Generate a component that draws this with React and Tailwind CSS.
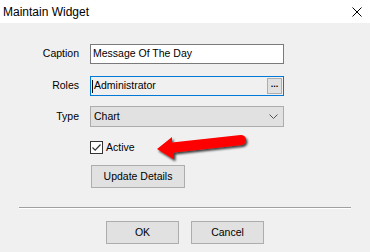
import React from "react";

const font = { fontFamily: '"Liberation Sans", Arial, sans-serif' };

// Red annotation arrow pointing at the Active checkbox
const Arrow = () => (
  <svg
    className="absolute left-0 top-0 pointer-events-none"
    width="370"
    height="252"
    viewBox="0 0 370 252"
  >
    <defs>
      <filter id="sh" x="-20%" y="-50%" width="140%" height="200%">
        <feDropShadow dx="1.5" dy="2" stdDeviation="1.3" floodColor="#000" floodOpacity="0.75" />
      </filter>
    </defs>
    <path
      d="M157 149 L172 137 L172 142.5 L240.5 135 A5 5 0 0 1 241.5 145 L174 152.5 L174 159.5 Z"
      fill="#ff0000"
      filter="url(#sh)"
    />
  </svg>
);

const Label = ({ children }) => (
  <div className="flex items-center justify-end text-[10.5px] text-black">{children}</div>
);

export default function App() {
  return (
    <div className="relative w-[370px] h-[252px] bg-[#f0f0f0] overflow-hidden" style={font}>
      {/* title bar */}
      <div className="h-[23px] bg-white flex items-center justify-between pl-[3px] pr-[8px]">
        <span className="text-[12px] text-black leading-none">Maintain Widget</span>
        <svg width="10" height="10" viewBox="0 0 10 10" className="mr-[0px]">
          <path d="M0.5 0.5 L9.5 9.5 M9.5 0.5 L0.5 9.5" stroke="#000" strokeWidth="1" />
        </svg>
      </div>

      {/* form */}
      <div className="pt-[21px]">
        <div className="grid grid-cols-[79px_194px] gap-x-[11px]">
          <Label>Caption</Label>
          <div className="h-[20px] bg-white border border-[#7a7a7a] flex items-center pl-[2px] text-[10.5px] text-black">
            Message Of The Day
          </div>
        </div>

        <div className="grid grid-cols-[79px_194px] gap-x-[11px] mt-[12px]">
          <Label>Roles</Label>
          <div className="h-[20px] bg-[#f0f0f0] border border-[#0078d7] flex items-center pl-[1px] pr-[1px] text-[10.5px] text-black">
            <span className="w-px h-[13px] bg-black mr-[1px]" />
            <span className="flex-1">Administrator</span>
            <span className="w-[15px] h-[16px] bg-[#e1e1e1] border border-[#adadad] flex items-center justify-center text-[9px] font-bold leading-none pb-[3px]">
              ...
            </span>
          </div>
        </div>

        <div className="grid grid-cols-[79px_194px] gap-x-[11px] mt-[10px]">
          <Label>Type</Label>
          <div className="h-[21px] bg-[#e1e1e1] border border-[#adadad] flex items-center justify-between pl-[3px] pr-[5px] text-[10.5px] text-black">
            <span>Chart</span>
            <svg width="9" height="5" viewBox="0 0 9 5">
              <path d="M0.5 0.5 L4.5 4.5 L8.5 0.5" stroke="#555" strokeWidth="1" fill="none" />
            </svg>
          </div>
        </div>

        <div className="ml-[90px] mt-[14px] flex items-center h-[13px]">
          <span className="w-[13px] h-[13px] bg-white border border-[#333] flex items-center justify-center">
            <svg width="11" height="11" viewBox="0 0 11 11">
              <path d="M1.5 5.5 L4.2 8.2 L9.5 2.5" stroke="#333" strokeWidth="1.2" fill="none" />
            </svg>
          </span>
          <span className="ml-[3px] text-[10.5px] text-black">Active</span>
        </div>

        <button className="ml-[91px] mt-[11px] w-[94px] h-[23px] bg-[#e1e1e1] border border-[#adadad] text-[10.5px] text-black flex items-center justify-center">
          Update Details
        </button>

        <div className="mx-[19px] mt-[19px] border-t border-[#a0a0a0] border-b border-b-white" />

        <div className="mt-[12px] flex justify-center gap-[12px]">
          <button className="w-[73px] h-[23px] bg-[#e1e1e1] border border-[#adadad] text-[10.5px] text-black">
            OK
          </button>
          <button className="w-[73px] h-[23px] bg-[#e1e1e1] border border-[#adadad] text-[10.5px] text-black">
            Cancel
          </button>
        </div>
      </div>

      <Arrow />
    </div>
  );
}
